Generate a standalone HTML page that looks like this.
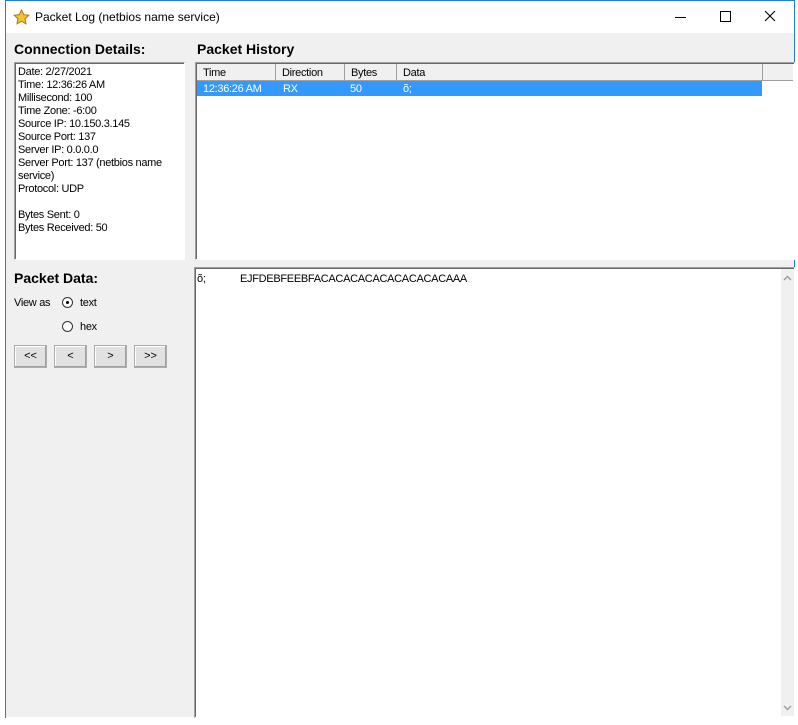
<!DOCTYPE html>
<html><head><style>
body{margin:0;width:798px;height:725px;background:#fff;position:relative;overflow:hidden;font-family:"Liberation Sans",sans-serif;font-size:11px;color:#000}
.a{position:absolute}
.t{letter-spacing:-0.3px}
.hd{font-weight:bold;font-size:14px}
.sunk{border-top:1px solid #a0a0a0;border-left:1px solid #a0a0a0;border-right:1px solid #fff;border-bottom:1px solid #fff;box-shadow:inset 1px 1px 0 #696969;background:#fff}
.btn{position:absolute;top:345px;width:31px;height:21px;background:#e1e1e1;border:1px solid #adadad;text-align:center;line-height:20px;font-size:11px;box-shadow:inset -1px -1px 0 #a0a0a0,inset 1px 1px 0 #fff}
.col{position:absolute;top:0;height:16px;border-right:1px solid #a0a0a0;padding-left:6px;line-height:19px;box-sizing:border-box}
</style></head><body>
<div class="a" style="left:5px;top:0;width:790px;height:1px;background:#1a7ee6"></div>
<div class="a" style="left:5px;top:0;width:1px;height:718px;background:#1a7ee6"></div>
<div class="a" style="left:794px;top:0;width:1px;height:718px;background:#1a7ee6"></div>
<div class="a" style="left:6px;top:33px;width:788px;height:684px;background:#f0f0f0"></div>
<svg class="a" style="left:13px;top:9px" width="17" height="16" viewBox="0 0 17 16"><path d="M8.5 1 L10.7 5.6 L15.8 6.2 L12 9.7 L13 14.8 L8.5 12.3 L4 14.8 L5 9.7 L1.2 6.2 L6.3 5.6Z" fill="#f6c42a" stroke="#a9791a" stroke-width="1"/></svg>
<div class="a" style="left:35px;top:10px;font-size:12px;color:#000">Packet Log (netbios name service)</div>
<div class="a" style="left:675px;top:17px;width:11px;height:1px;background:#000"></div>
<div class="a" style="left:720px;top:11px;width:9px;height:9px;border:1px solid #000"></div>
<svg class="a" style="left:764px;top:10px" width="12" height="12"><path d="M1 1L11 11M11 1L1 11" stroke="#000" stroke-width="1.1"/></svg>
<div class="a hd" style="left:14px;top:41px">Connection Details:</div>
<div class="a hd" style="left:197px;top:41px">Packet History</div>
<div class="a sunk" style="left:14px;top:62px;width:169px;height:196px"></div>
<div class="a t" style="left:18px;top:66px;line-height:13px;width:165px">Date: 2/27/2021<br>Time: 12:36:26 AM<br>Millisecond: 100<br>Time Zone: -6:00<br>Source IP: 10.150.3.145<br>Source Port: 137<br>Server IP: 0.0.0.0<br>Server Port: 137 (netbios name<br>service)<br>Protocol: UDP<br><br>Bytes Sent: 0<br>Bytes Received: 50</div>
<div class="a sunk" style="left:195px;top:62px;width:598px;height:196px"></div>
<div class="a t" style="left:197px;top:64px;width:596px;height:17px;background:#f0f0f0;border-bottom:1px solid #a0a0a0;box-sizing:border-box">
<div class="col" style="left:0;width:79px">Time</div>
<div class="col" style="left:79px;width:69px">Direction</div>
<div class="col" style="left:148px;width:52px">Bytes</div>
<div class="col" style="left:200px;width:366px">Data</div>
</div>
<div class="a t" style="left:197px;top:81px;width:565px;height:15px;background:#3399ff;color:#fff;line-height:17px">
<span class="a" style="left:6px">12:36:26 AM</span><span class="a" style="left:86px">RX</span><span class="a" style="left:153px">50</span><span class="a" style="left:206px">õ;</span></div>
<div class="a hd" style="left:14px;top:270px">Packet Data:</div>
<div class="a t" style="left:14px;top:297px">View as</div>
<div class="a" style="left:62px;top:297px;width:11px;height:11px;border-radius:50%;border:1px solid #333;background:#fff;box-sizing:border-box"></div>
<div class="a" style="left:66px;top:301px;width:3px;height:3px;border-radius:50%;background:#000"></div>
<div class="a t" style="left:80px;top:297px">text</div>
<div class="a" style="left:62px;top:321px;width:11px;height:11px;border-radius:50%;border:1px solid #333;background:#fff;box-sizing:border-box"></div>
<div class="a t" style="left:80px;top:321px">hex</div>
<div class="btn" style="left:14px">&lt;&lt;</div>
<div class="btn" style="left:54px">&lt;</div>
<div class="btn" style="left:94px">&gt;</div>
<div class="btn" style="left:134px">&gt;&gt;</div>
<div class="a sunk" style="left:194px;top:267px;width:599px;height:449px"></div>
<div class="a" style="left:781px;top:269px;width:13px;height:447px;background:#f0f0f0"></div>
<svg class="a" style="left:783px;top:275px" width="9" height="6"><path d="M1 5L4.5 1.5L8 5" stroke="#a0a0a0" fill="none" stroke-width="1.5"/></svg>
<svg class="a" style="left:783px;top:705px" width="9" height="6"><path d="M1 1L4.5 4.5L8 1" stroke="#a0a0a0" fill="none" stroke-width="1.5"/></svg>
<div class="a t" style="left:197px;top:273px">õ;</div>
<div class="a t" style="left:240px;top:273px">EJFDEBFEEBFACACACACACACACACACAAA</div>
</body></html>
